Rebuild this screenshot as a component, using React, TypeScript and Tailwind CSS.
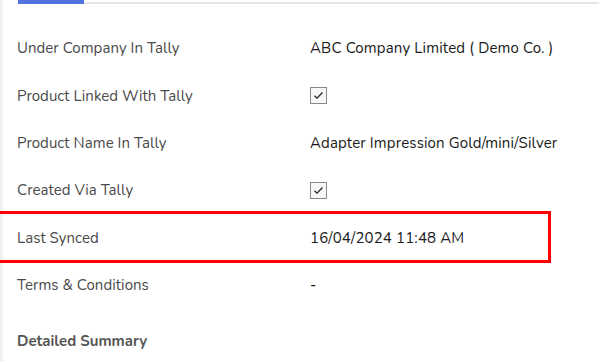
import React from "react";

const Check = () => (
  <span className="flex h-[17px] w-[17px] items-center justify-center border border-[#8a8a8a] bg-[#f7f7f7]">
    <svg width="11" height="9" viewBox="0 0 11 9" fill="none">
      <path d="M1.5 4.8 L4 7.2 L9.5 1.5" stroke="#222" strokeWidth="1.3" />
    </svg>
  </span>
);

const rows: { label: string; value: React.ReactNode }[] = [
  { label: "Under Company In Tally", value: "ABC Company Limited ( Demo Co. )" },
  { label: "Product Linked With Tally", value: <Check /> },
  { label: "Product Name In Tally", value: "Adapter Impression Gold/mini/Silver" },
  { label: "Created Via Tally", value: <Check /> },
  { label: "Last Synced", value: "16/04/2024 11:48 AM" },
  { label: "Terms & Conditions", value: "-" },
];

export default function App() {
  return (
    <div
      className="relative h-[361px] w-[599px] overflow-hidden bg-white"
      style={{ fontFamily: "Nunito, Lato, 'Noto Sans', sans-serif" }}
    >
      <div className="absolute left-0 top-0 h-full w-[5px] bg-gradient-to-r from-[#ececec] to-white" />
      <div className="flex h-[4px] pl-[18px]">
        <div className="h-[4px] w-[66px] bg-[#5272e0]" />
        <div className="mt-[2px] h-[2px] flex-1 bg-[#e4e4ea]" />
      </div>
      <div className="pt-[21px] pl-[17px]">
        {rows.map((r) => (
          <div key={r.label} className="grid h-[47.3px] grid-cols-[293px_1fr] items-center">
            <div className="text-[15px] tracking-[0.05px] text-[#4a4a4a]">{r.label}</div>
            <div className="flex text-[15px] tracking-[0.15px] text-[#1a1a1a]">{r.value}</div>
          </div>
        ))}
        <div className="mt-[21px] text-[15px] font-bold text-[#555]">Detailed Summary</div>
      </div>
      <div className="absolute left-[-5px] top-[211px] h-[52px] w-[556px] border-[3px] border-[#ff0000]" />
    </div>
  );
}
